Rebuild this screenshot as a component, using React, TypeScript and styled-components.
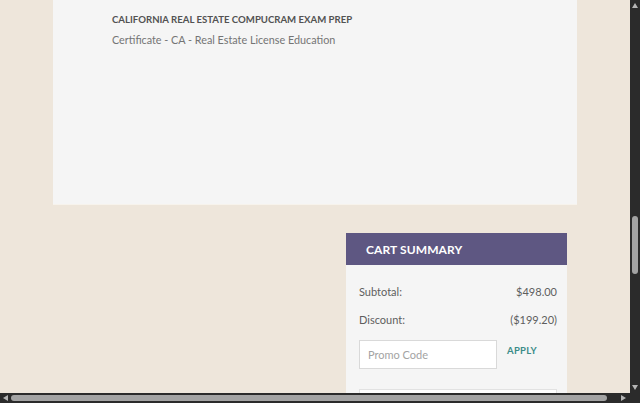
import React from 'react';
import styled, { createGlobalStyle } from 'styled-components';

const GlobalStyle = createGlobalStyle`
    html, body {
        margin: 0;
        padding: 0;
        overflow: hidden;
    }
    body {
        font-family: Lato, "Open Sans", Arial, sans-serif;
    }
`;

const Frame = styled.div`
    width: 640px;
    height: 403px;
    display: grid;
    grid-template-columns: 1fr 10px;
    grid-template-rows: 1fr 10px;
    background: #2b2b2b;
`;

const Viewport = styled.div`
    background: #eee6db;
    overflow: hidden;
    display: flex;
    flex-direction: column;
    align-items: center;
`;

const Page = styled.div`
    width: 524px;
    display: flex;
    flex-direction: column;
`;

const CourseCard = styled.div`
    background: #f5f5f5;
    height: 204px;
    padding: 14px 0 0 59px;
    box-sizing: border-box;
    box-shadow: 0 1px 0 #f7f3ec;
`;

const CourseTitle = styled.div`
    font-size: 9.6px;
    font-weight: 700;
    color: #525252;
    line-height: 12px;
`;

const CourseSub = styled.div`
    margin-top: 7px;
    font-size: 10.8px;
    color: #747474;
    line-height: 14px;
`;

const Summary = styled.div`
    margin: 29px 10px 0 auto;
    width: 221px;
    background: #f5f5f5;
`;

const SummaryHeader = styled.div`
    height: 32px;
    background: #5e5782;
    color: #fff;
    font-weight: 700;
    font-size: 12px;
    letter-spacing: 0.1px;
    display: flex;
    align-items: center;
    padding-left: 20px;
`;

const SummaryBody = styled.div`
    padding: 20px 10px 0 13px;
    display: flex;
    flex-direction: column;
`;

const Row = styled.div`
    display: flex;
    justify-content: space-between;
    font-size: 11px;
    line-height: 14px;
    color: #5e5e5e;
    height: 28px;
`;

const PromoRow = styled.div`
    display: flex;
    align-items: flex-start;
    gap: 10px;
    margin-top: -1px;
`;

const PromoInput = styled.input`
    width: 138px;
    height: 29px;
    box-sizing: border-box;
    border: 1px solid #d9d9d9;
    background: #fff;
    padding: 0 8px;
    font-family: inherit;
    font-size: 11px;
    outline: none;
    &::placeholder {
        color: #a3a3a3;
    }
`;

const ApplyButton = styled.button`
    border: none;
    background: none;
    padding: 0;
    margin-top: 5px;
    font-family: inherit;
    font-weight: 700;
    font-size: 9.5px;
    letter-spacing: 0.3px;
    color: #3b8c88;
    cursor: pointer;
`;

const NextBox = styled.div`
    margin-top: 20px;
    height: 30px;
    background: #fff;
    border: 1px solid #e2e2e2;
`;

const VTrack = styled.div`
    background: #2b2b2b;
    position: relative;
    display: flex;
    flex-direction: column;
    align-items: center;
`;

const VThumb = styled.div`
    margin-top: 216px;
    width: 6px;
    height: 58px;
    border-radius: 3px;
    background: #a3a3a3;
`;

const HTrack = styled.div`
    background: #2b2b2b;
    display: flex;
    align-items: center;
    padding-left: 3px;
    gap: 3px;
`;

const HThumb = styled.div`
    height: 6px;
    width: 596px;
    border-radius: 3px;
    background: #a3a3a3;
`;

const Arrow = styled.svg`
    flex: none;
    display: block;
`;

const HArrowEnd = styled(Arrow)`
    margin-left: 11px;
`;

const VArrowTop = styled(Arrow)`
    position: absolute;
    top: 3px;
`;

const VArrowBottom = styled(Arrow)`
    position: absolute;
    bottom: 3px;
`;

const Corner = styled.div`
    background: #2b2b2b;
`;

export default function App() {
    return (
        <>
            <GlobalStyle />
            <Frame>
                <Viewport>
                    <Page>
                        <CourseCard>
                            <CourseTitle>CALIFORNIA REAL ESTATE COMPUCRAM EXAM PREP</CourseTitle>
                            <CourseSub>Certificate - CA - Real Estate License Education</CourseSub>
                        </CourseCard>
                        <Summary>
                            <SummaryHeader>CART SUMMARY</SummaryHeader>
                            <SummaryBody>
                                <Row>
                                    <span>Subtotal:</span>
                                    <span>$498.00</span>
                                </Row>
                                <Row>
                                    <span>Discount:</span>
                                    <span>($199.20)</span>
                                </Row>
                                <PromoRow>
                                    <PromoInput placeholder="Promo Code" />
                                    <ApplyButton>APPLY</ApplyButton>
                                </PromoRow>
                                <NextBox />
                            </SummaryBody>
                        </Summary>
                    </Page>
                </Viewport>
                <VTrack>
                    <VArrowTop width="6" height="5" viewBox="0 0 6 5">
                        <path d="M3 0 L6 5 L0 5 Z" fill="#b5b5b5" />
                    </VArrowTop>
                    <VThumb />
                    <VArrowBottom width="6" height="5" viewBox="0 0 6 5">
                        <path d="M0 0 L6 0 L3 5 Z" fill="#b5b5b5" />
                    </VArrowBottom>
                </VTrack>
                <HTrack>
                    <Arrow width="5" height="6" viewBox="0 0 5 6">
                        <path d="M0 3 L5 0 L5 6 Z" fill="#b5b5b5" />
                    </Arrow>
                    <HThumb />
                    <HArrowEnd width="5" height="6" viewBox="0 0 5 6">
                        <path d="M0 0 L5 3 L0 6 Z" fill="#b5b5b5" />
                    </HArrowEnd>
                </HTrack>
                <Corner />
            </Frame>
        </>
    );
}
